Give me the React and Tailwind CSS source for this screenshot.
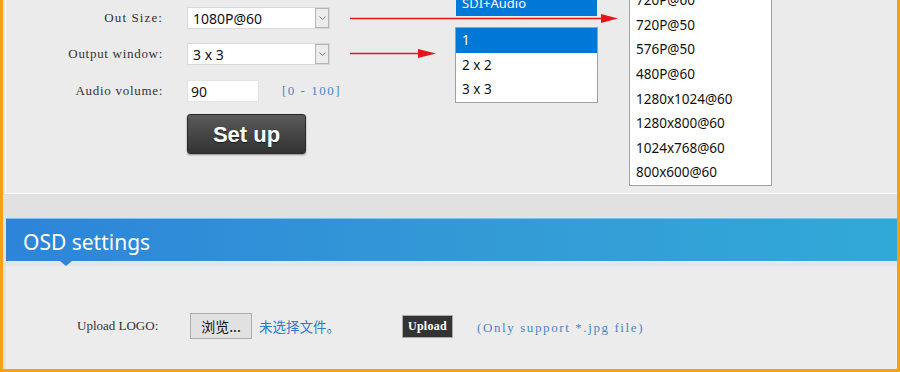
const serif = { fontFamily: '"Liberation Serif", "DejaVu Serif", serif' };

const outSizes = [
  "720P@60",
  "720P@50",
  "576P@50",
  "480P@60",
  "1280x1024@60",
  "1280x800@60",
  "1024x768@60",
  "800x600@60",
];

function Label({ children }) {
  return (
    <div className="w-[158px] pr-[1px] text-right text-[13px] tracking-[0.7px] text-[#333]" style={serif}>
      {children}
    </div>
  );
}

function Select({ value }) {
  return (
    <div className="flex h-[22px] w-[143px] items-stretch border border-[#d9d9d9] bg-white">
      <div className="flex flex-1 items-center pl-[5px] text-[14px] text-[#111] font-['Noto_Sans',sans-serif]">
        {value}
      </div>
      <div className="flex w-[14px] items-center justify-center border border-[#b4b4b4] bg-[#ececec]">
        <svg width="7" height="4" viewBox="0 0 7 4">
          <path d="M0.5 0.5 L3.5 3.5 L6.5 0.5" fill="none" stroke="#777" strokeWidth="1" />
        </svg>
      </div>
    </div>
  );
}

function Arrows() {
  return (
    <svg className="pointer-events-none absolute left-0 top-0" width="900" height="372">
      <line x1="347" y1="18.5" x2="602" y2="18.5" stroke="#e8141b" strokeWidth="1.6" />
      <polygon points="598,14 615,18.5 598,23" fill="#e8141b" />
      <line x1="347" y1="53.5" x2="418" y2="53.5" stroke="#e8141b" strokeWidth="1.6" />
      <polygon points="415,49 433,53.5 415,58" fill="#e8141b" />
    </svg>
  );
}

export default function App() {
  return (
    <div className="relative h-[372px] w-[900px] overflow-hidden border-x-[3px] border-b-[3px] border-[#f6a01a] bg-[#e1e1e1] font-['Noto_Sans',sans-serif]">
      <section className="ml-[2px] h-[194px] border-b border-l border-white bg-[#ebebeb] pt-[7px]">
        <div className="flex flex-col gap-[14px]">
          <div className="flex items-center gap-[23px]">
            <Label>
              <span className="tracking-[1.1px]">Out Size:</span>
            </Label>
            <Select value="1080P@60" />
          </div>
          <div className="flex items-center gap-[23px]">
            <Label>Output window:</Label>
            <Select value="3 x 3" />
          </div>
          <div className="mt-[1px] flex items-center gap-[23px]">
            <Label>Audio volume:</Label>
            <div className="flex h-[22px] w-[72px] items-center border border-[#e3e3e3] bg-white pl-[3px] text-[14px] text-[#111]">
              90
            </div>
            <div className="text-[13px] tracking-[1.5px] text-[#4a86cc]" style={serif}>
              [0 - 100]
            </div>
          </div>
          <div className="flex">
            <div className="w-[181px]" />
            <button className="-mt-[2px] flex h-[40px] w-[119px] items-center justify-center rounded-[3px] border border-[#2a2a2a] bg-gradient-to-b from-[#5a5a5a] to-[#333] font-['Liberation_Sans',sans-serif] text-[22px] font-bold text-white shadow-[0_1px_2px_rgba(0,0,0,0.4)] [text-shadow:0_1px_1px_rgba(0,0,0,0.6)]">
              Set up
            </button>
          </div>
        </div>
      </section>

      <div className="h-[24px]" />

      <section className="ml-[3px] flex h-[43px] items-center bg-gradient-to-r from-[#2d84d9] via-[#3399d6] to-[#31a9d8] pl-[17px] pt-[6px] shadow-[inset_0_1px_0_#7cc4ee]">
        <h2 className="text-[21px] leading-none text-white">OSD settings</h2>
      </section>
      <div className="relative ml-[3px] h-[5px] bg-[#e4e7ea]">
        <svg className="absolute left-[54px] top-0" width="12" height="5" viewBox="0 0 12 5">
          <polygon points="0,0 12,0 6,5" fill="#2e86d8" />
        </svg>
      </div>
      <section className="ml-[3px] h-[110px] bg-[#ececec] pt-[47px]">
        <div className="flex items-center">
          <div className="w-[71px]" />
          <div className="w-[113px] text-[13px] tracking-[0px] text-[#333]" style={serif}>
            Upload LOGO:
          </div>
          <div className="flex h-[26px] w-[62px] items-center justify-center border border-[#adadad] bg-[#e1e1e1] text-[14px] text-[#111] font-['Noto_Sans_CJK_SC',sans-serif]">
            浏览...
          </div>
          <div className="ml-[7px] w-[143px] text-[13.5px] text-[#2d7bd0] font-['Noto_Sans_CJK_SC',sans-serif]">
            未选择文件。
          </div>
          <div className="flex h-[23px] w-[51px] items-center justify-center border border-[#aaa] bg-[#333] text-[12px] font-bold tracking-[0.3px] text-white" style={serif}>
            Upload
          </div>
          <div className="ml-[24px] pt-[3px] text-[13px] tracking-[1.6px] text-[#4a86cc]" style={serif}>
            (Only support *.jpg file)
          </div>
        </div>
      </section>

      {/* open select menus */}
      <div className="absolute left-[453px] top-[-8px] flex h-[24px] w-[141px] items-center bg-[#0078d7] pl-[6px] text-[13px] text-white">
        SDI+Audio
      </div>
      <div className="absolute left-[452px] top-[27px] w-[143px] border border-[#a0a0a0] bg-white text-[13.5px] text-[#111]">
        <div className="flex h-[24.6px] items-center bg-[#0078d7] pl-[6px] text-white">1</div>
        <div className="flex h-[24.6px] items-center pl-[6px]">2 x 2</div>
        <div className="flex h-[24.6px] items-center pl-[6px]">3 x 3</div>
      </div>
      <div className="absolute left-[626px] top-[-13px] w-[143px] border border-[#a0a0a0] bg-white text-[13.5px] text-[#111]">
        {outSizes.map((s) => (
          <div key={s} className="flex h-[24.6px] items-center pl-[6px]">
            {s}
          </div>
        ))}
      </div>
      <Arrows />
    </div>
  );
}
